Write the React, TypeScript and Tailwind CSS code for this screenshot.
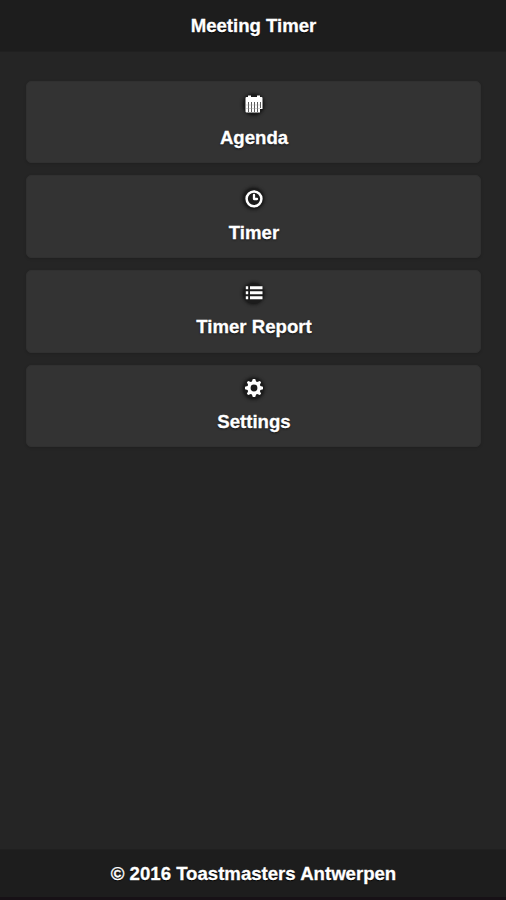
import type { ReactNode } from "react";

function Icon({ children }: { children: ReactNode }) {
  return (
    <span className="flex size-[25px] items-center justify-center">
      <span className="flex size-[21px] items-center justify-center rounded-full bg-[#1c1c1c] shadow-[0_0_3px_1px_#1c1c1c]">
        <svg className="size-[18px] shrink-0" viewBox="0 0 18 18" fill="#fff">
          {children}
        </svg>
      </span>
    </span>
  );
}

const calendar = (
  <>
    <path d="M.5 3Q.5 2 1.5 2H3V.5H6V2H12V.5H15V2H16.5Q17.5 2 17.5 3V14H15V17.5H1.5Q.5 17.5 .5 16.5Z" />
    <path
      d="M3.5 7V17M6.5 7V17M9.5 7V17M12.5 7V17M15.5 7V13"
      stroke="#333"
      strokeWidth=".8"
    />
    <path d="M1 10H15M1 13.5H15" stroke="#999" strokeWidth=".4" />
  </>
);

const clock = (
  <g fill="none" stroke="#fff" strokeWidth="2.5">
    <circle cx="9" cy="8.8" r="7.4" />
    <path d="M9 5V9H12" strokeLinecap="round" strokeLinejoin="round" strokeWidth="2.3" />
  </g>
);

const list = (
  <path d="M.8 2.2h2.4v3H.8zM5 2.2h12.5v3H5zM.8 7.2h2.4v3H.8zM5 7.2h12.5v3H5zM.8 12.2h2.4v3H.8zM5 12.2h12.5v3H5z" />
);

const gear = (
  <path
    fillRule="evenodd"
    d="M7.8 0h2.4l.9 2.6 1.1.5 2.6-1.2 1.3 1.3-1.2 2.6.5 1.1 2.6.9v2.4l-2.6.9-.5 1.1 1.2 2.6-1.3 1.3-2.6-1.2-1.1.5-.9 2.6H7.8l-.9-2.6-1.1-.5-2.6 1.2-1.3-1.3 1.2-2.6-.5-1.1L0 10.2V7.8l2.6-.9.5-1.1-1.2-2.6 1.3-1.3 2.6 1.2 1.1-.5zM9 5.6a3.4 3.4 0 1 0 0 6.8 3.4 3.4 0 0 0 0-6.8z"
  />
);

const items = [
  { label: "Agenda", icon: calendar },
  { label: "Timer", icon: clock },
  { label: "Timer Report", icon: list },
  { label: "Settings", icon: gear },
];

export default function App() {
  return (
    <div className="flex h-[900px] flex-col bg-[#252525] font-['Liberation_Sans',Arial,sans-serif] text-[18.6px] leading-6 font-bold text-white [-webkit-text-stroke:0.3px_#fff] [text-shadow:0_1px_1px_#000]">
      <header className="h-[52px] shrink-0 border-b border-[#202020] bg-[#1d1d1d] pt-[14px] pl-px text-center">
        <h1>Meeting Timer</h1>
      </header>
      <main className="flex grow flex-col gap-3 pt-[28.8px] pr-[25px] pl-[26px]">
        {items.map(({ label, icon }) => (
          <button
            key={label}
            className="flex h-[82.6px] shrink-0 flex-col items-center rounded-[5px] border border-[#303030] bg-[#333] pt-[10px] shadow-[0_1px_3px_rgba(0,0,0,0.15)] [text-shadow:0_1px_2px_#111]"
          >
            <Icon>{icon}</Icon>
            <span className="mt-[9.5px] pl-px">{label}</span>
          </button>
        ))}
      </main>
      <footer className="h-[51px] shrink-0 border-t border-[#202020] border-b-3 border-b-[#171116] bg-[#1d1d1d] pt-[12px] pl-px text-center">
        © 2016 Toastmasters Antwerpen
      </footer>
    </div>
  );
}
